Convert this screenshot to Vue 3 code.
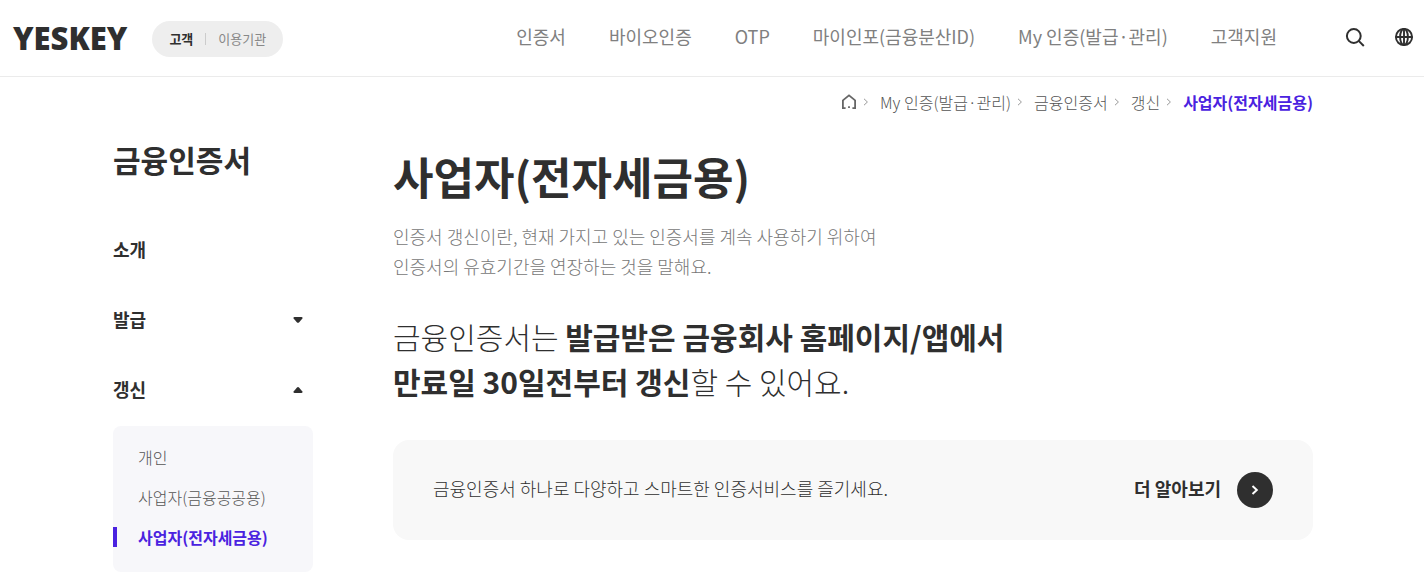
<script setup>
import { ref } from 'vue'

const audience = ref('customer')
const nav = ['인증서', '바이오인증', 'OTP', '마이인포(금융분산ID)', 'My 인증(발급·관리)', '고객지원']
const crumbs = ['My 인증(발급·관리)', '금융인증서', '갱신']
const current = '사업자(전자세금용)'
const subItems = ['개인', '사업자(금융공공용)', current]
const issueOpen = ref(false)
const renewOpen = ref(true)
</script>

<template>
  <div class="page">
    <header class="header">
      <a class="logo" href="#">YESKEY</a>
      <div class="audience">
        <button type="button" :class="{ on: audience === 'customer' }" @click="audience = 'customer'">고객</button>
        <span class="divider"></span>
        <button type="button" :class="{ on: audience === 'agency' }" @click="audience = 'agency'">이용기관</button>
      </div>
      <nav class="nav">
        <a v-for="item in nav" :key="item" href="#">{{ item }}</a>
      </nav>
      <div class="tools">
        <button type="button" aria-label="검색">
          <svg width="20" height="20" viewBox="0 0 20 20" fill="none" stroke="#2f2f2f" stroke-width="2">
            <circle cx="8.8" cy="8" r="6.9" />
            <path d="M13.7 12.9L18.8 18" />
          </svg>
        </button>
        <button type="button" aria-label="언어">
          <svg width="20" height="20" viewBox="0 0 20 20" fill="none" stroke="#2f2f2f" stroke-width="1.9">
            <circle cx="10" cy="9" r="8.1" />
            <ellipse cx="10" cy="9" rx="3.9" ry="8.1" />
            <path d="M1.9 9H18.1M10 .9V17.1" />
          </svg>
        </button>
      </div>
    </header>

    <nav class="crumbs" aria-label="현재 위치">
      <a class="home" href="#" aria-label="홈">
        <svg width="16" height="16" viewBox="0 0 16 16" fill="none" stroke="#666" stroke-width="1.8">
          <path d="M4.6 14.2H1.9V6.4L8 1.3L14.1 6.4V14.2H11.4" />
          <path d="M7.1 13.1H8.9" />
        </svg>
      </a>
      <template v-for="c in crumbs" :key="c">
        <svg class="sep" width="6" height="8" viewBox="0 0 6 8" fill="none" stroke="#999"><path d="M1 .8L4.4 4L1 7.2" /></svg>
        <a href="#">{{ c }}</a>
      </template>
      <svg class="sep" width="6" height="8" viewBox="0 0 6 8" fill="none" stroke="#999"><path d="M1 .8L4.4 4L1 7.2" /></svg>
      <strong>{{ current }}</strong>
    </nav>

    <div class="body">
      <aside class="side">
        <h2>금융인증서</h2>
        <ul class="menu">
          <li><a class="row" href="#">소개</a></li>
          <li>
            <button class="row" type="button" :aria-expanded="issueOpen" @click="issueOpen = !issueOpen">
              발급
              <svg :class="{ up: issueOpen }" width="10" height="8" viewBox="0 0 10 8"><path d="M1.5 2H8.5Q10 2.3 9.4 3.6L6.2 7.2Q5 8.4 3.8 7.2L.6 3.6Q0 2.3 1.5 2Z" fill="#2f2f2f" /></svg>
            </button>
          </li>
          <li>
            <button class="row" type="button" :aria-expanded="renewOpen" @click="renewOpen = !renewOpen">
              갱신
              <svg :class="{ up: renewOpen }" width="10" height="8" viewBox="0 0 10 8"><path d="M1.5 0H8.5Q10 .3 9.4 1.6L6.2 5.3Q5 6.6 3.8 5.3L.6 1.6Q0 .3 1.5 0Z" fill="#2f2f2f" /></svg>
            </button>
            <ul v-if="renewOpen" class="sub">
              <li v-for="s in subItems" :key="s"><a href="#" :class="{ active: s === current }">{{ s }}</a></li>
            </ul>
          </li>
        </ul>
      </aside>

      <main class="main">
        <h1>{{ current }}</h1>
        <p class="desc">인증서 갱신이란, 현재 가지고 있는 인증서를 계속 사용하기 위하여<br />인증서의 유효기간을 연장하는 것을 말해요.</p>
        <p class="lead">금융인증서는 <b>발급받은 금융회사 홈페이지/앱에서<br />만료일 30일전부터 갱신</b>할 수 있어요.</p>
        <div class="card">
          <p>금융인증서 하나로 다양하고 스마트한 인증서비스를 즐기세요.</p>
          <a class="more" href="#">
            <span>더 알아보기</span>
            <span class="round">
              <svg width="8" height="10" viewBox="0 0 8 10" fill="none" stroke="#fff" stroke-width="2"><path d="M1.5 1L5.8 5L1.5 9" /></svg>
            </span>
          </a>
        </div>
      </main>
    </div>
  </div>
</template>

<style>
body {
  margin: 0;
  background: #fff;
}
</style>

<style scoped>
.page {
  font-family: "Noto Sans CJK KR", sans-serif;
  font-size: 18px;
  line-height: 30px;
  color: #2f2f2f;
}
a {
  color: inherit;
  text-decoration: none;
}
button {
  padding: 0;
  border: 0;
  background: none;
  font: inherit;
  color: inherit;
  cursor: pointer;
}
svg {
  display: block;
  flex: none;
}
h1, h2, p, ul {
  margin: 0;
  padding: 0;
}
ul {
  list-style: none;
}
.header {
  display: flex;
  align-items: center;
  height: 76px;
  padding: 0 10px 0 13px;
  border-bottom: 1px solid #ebebeb;
  white-space: nowrap;
}
.logo {
  font-family: "Open Sans", sans-serif;
  font-weight: 800;
  font-size: 31px;
  line-height: 36px;
}
.audience {
  display: flex;
  align-items: center;
  gap: 12px;
  height: 36px;
  margin: 2px 0 0 25px;
  padding: 0 17px;
  border-radius: 18px;
  background: #eee;
  font-size: 13px;
  color: #888;
}
.audience .on {
  font-weight: 700;
  color: #2f2f2f;
}
.divider {
  width: 1px;
  height: 12px;
  background: #ccc;
}
.nav {
  display: flex;
  gap: 43px;
  margin-left: auto;
  padding-bottom: 4px;
  color: #808080;
}
.tools {
  display: flex;
  gap: 29px;
  margin-left: 68px;
}
.crumbs {
  display: flex;
  align-items: center;
  justify-content: flex-end;
  height: 50px;
  padding-right: 111px;
  font-size: 16px;
  font-weight: 300;
  color: #555;
}
.sep {
  margin: 0 11px 0 6px;
}
.crumbs strong {
  font-weight: 700;
  color: #4a22e0;
}
.body {
  display: flex;
  gap: 80px;
  padding: 12px 111px 14px 113px;
}
.side {
  flex: 0 0 200px;
}
.side h2 {
  font-size: 30px;
  line-height: 40px;
  font-weight: 700;
}
.menu {
  display: grid;
  gap: 40px;
  margin-top: 55px;
}
.row {
  display: flex;
  align-items: center;
  justify-content: space-between;
  width: 100%;
  padding-right: 10px;
  box-sizing: border-box;
  font-weight: 700;
}
.up {
  transform: rotate(180deg);
}
.sub {
  margin-top: 22px;
  padding: 11px 0 15px;
  border-radius: 8px;
  background: #f7f7fa;
  font-size: 16px;
  font-weight: 300;
  color: #555;
}
.sub li {
  padding: 10px 0;
}
.sub a {
  display: block;
  padding-left: 25px;
  line-height: 20px;
}
.sub .active {
  padding-left: 21px;
  border-left: 4px solid #4a22e0;
  font-weight: 700;
  color: #4a22e0;
}
.main {
  flex: 1;
  min-width: 0;
  padding-top: 7px;
}
h1 {
  font-size: 44px;
  line-height: 60px;
  font-weight: 700;
}
.desc {
  margin-top: 15px;
  font-weight: 300;
  color: #777;
}
.lead {
  margin-top: 33px;
  font-size: 30px;
  line-height: 45px;
  font-weight: 300;
}
.lead b {
  font-weight: 700;
}
.card {
  display: flex;
  align-items: center;
  justify-content: space-between;
  height: 100px;
  margin-top: 36px;
  padding: 0 40px;
  border-radius: 16px;
  background: #f8f8f8;
}
.card p,
.more span:first-child {
  padding-bottom: 4px;
}
.card p {
  font-weight: 300;
}
.more {
  display: flex;
  align-items: center;
  gap: 16px;
  font-weight: 700;
}
.round {
  display: grid;
  place-items: center;
  width: 36px;
  height: 36px;
  border-radius: 50%;
  background: #2f2f2f;
}
</style>
